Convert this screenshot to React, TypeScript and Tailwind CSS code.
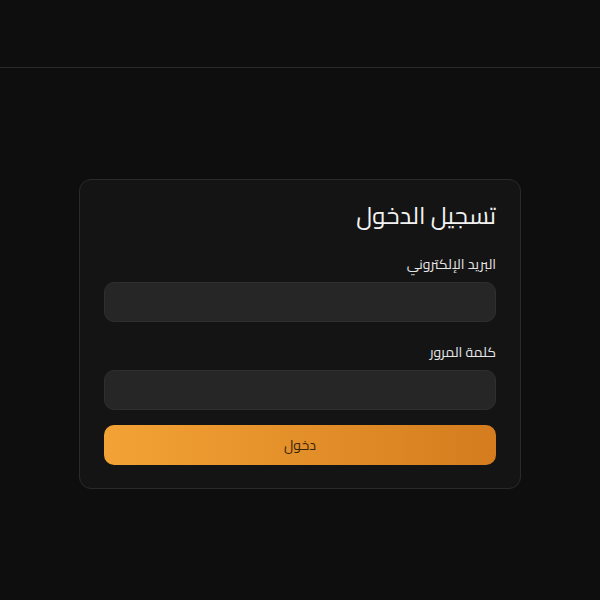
export default function App() {
  return (
    <div
      dir="rtl"
      className="min-h-screen flex flex-col bg-[#0e0e0e] text-[#e5e5e5]"
      style={{ fontFamily: 'Cairo, "Noto Sans", sans-serif' }}
    >
      <header className="h-[68px] border-b border-[#2a2a2a]" />
      <main className="flex-1 flex items-center justify-center">
        <form className="w-[442px] bg-[#141414] border border-[#2a2a2a] rounded-xl px-6 pt-5 pb-[23px]">
          <h1 className="text-2xl leading-8 text-[#f2f2f2] mb-[22px]">تسجيل الدخول</h1>
          <label className="block text-sm leading-5 text-[#e5e5e5] mb-2">البريد الإلكتروني</label>
          <input
            type="email"
            className="w-full h-10 bg-[#262626] border border-[#2f2f2f] rounded-[10px] px-3 text-sm outline-none mb-5"
          />
          <label className="block text-sm leading-5 text-[#e5e5e5] mb-2">كلمة المرور</label>
          <input
            type="password"
            className="w-full h-10 bg-[#262626] border border-[#2f2f2f] rounded-[10px] px-3 text-sm outline-none mb-[15px]"
          />
          <button
            type="submit"
            className="w-full h-10 rounded-[10px] bg-gradient-to-l from-[#d47c1e] to-[#f3a335] text-[#3a2408] text-sm"
          >
            دخول
          </button>
        </form>
      </main>
    </div>
  );
}
